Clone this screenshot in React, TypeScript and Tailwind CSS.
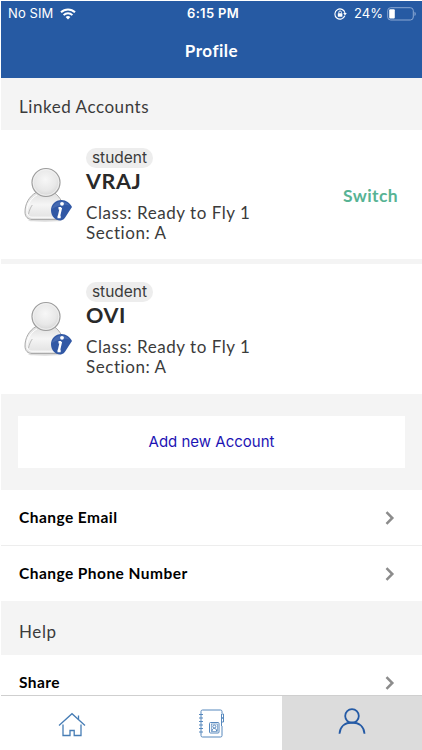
import React from 'react';

const accounts = [
  { role: 'student', name: 'VRAJ', className: 'Ready to Fly 1', section: 'A', canSwitch: true },
  { role: 'student', name: 'OVI', className: 'Ready to Fly 1', section: 'A', canSwitch: false },
];

function WifiIcon() {
  return (
    <svg width="16" height="12" viewBox="0 0 16 12" fill="none" stroke="white" strokeWidth="2">
      <path d="M1 4.3a10 10 0 0 1 14 0" />
      <path d="M3.6 7.1a6.3 6.3 0 0 1 8.8 0" />
      <path d="M8 11.5 5.6 9.1a3.4 3.4 0 0 1 4.8 0Z" fill="white" stroke="none" />
    </svg>
  );
}

function RotationLockIcon() {
  return (
    <svg width="13" height="12" viewBox="0 0 13 12" fill="none" stroke="white">
      <path d="M10.8 7.8A5.1 5.1 0 1 1 11 5" strokeWidth="1.1" />
      <path d="M9.2 5h3.6L11 7.4Z" fill="white" stroke="none" />
      <rect x="3.8" y="5.3" width="4.6" height="3.4" rx=".4" fill="white" stroke="none" />
      <path d="M4.8 5.5V4.3a1.3 1.3 0 0 1 2.6 0v1.2" strokeWidth=".9" />
    </svg>
  );
}

function BatteryIcon() {
  return (
    <svg width="30" height="14" viewBox="0 0 30 14" fill="none">
      <rect x=".7" y=".7" width="25.6" height="12.3" rx="3" stroke="#8ba8d3" />
      <rect x="2.2" y="2.2" width="5.6" height="9.3" rx="1" fill="white" />
      <path d="M27.5 4.8c1.7.6 1.7 3.6 0 4.2Z" fill="#8ba8d3" />
    </svg>
  );
}

function Avatar() {
  return (
    <svg width="50" height="56" viewBox="0 0 50 56" fill="none" className="shrink-0">
      <defs>
        <radialGradient id="head" cx=".48" cy=".4" r=".6">
          <stop offset="0" stopColor="#f7f7f7" />
          <stop offset=".65" stopColor="#e8e8e8" />
          <stop offset="1" stopColor="#d4d4d4" />
        </radialGradient>
        <linearGradient id="body" x1="0" y1="0" x2="0" y2="1">
          <stop offset="0" stopColor="#dedede" />
          <stop offset=".45" stopColor="#f5f5f5" />
          <stop offset="1" stopColor="#e0e0e0" />
        </linearGradient>
      </defs>
      <ellipse cx="22" cy="53.5" rx="17" ry="1.2" fill="#dcdcdc" />
      <path
        d="M13 25.5C6 29.5 2 37 2 45c0 5 3 7.5 7 7.5h25c4 0 7-3 7-7.5 0-8-4-15.5-10-19.5Z"
        fill="url(#body)"
        stroke="#aaa"
      />
      <path d="M14 28C8 31 4 38 4 44.5c0 4 2 5.7 5 5.7h25" stroke="#fff" />
      <path d="M5.5 47c1-4 2-6.5 3.8-9" stroke="#bbb" />
      <circle cx="23" cy="15.5" r="14" fill="url(#head)" stroke="#9d9d9d" strokeWidth="1.2" />
      <circle cx="23" cy="15.5" r="12.8" stroke="#f4f4f4" strokeWidth=".8" />
      <path
        d="M38.5 33c4.500 0 8.500 3 10.500 7-2 3-4 6-6 9.300-1.200 2.200-3 4.200-5.500 4.200-5.500 0-9.500-4.500-9.500-10.200C28 37.500 32.500 33 38.500 33Z"
        fill="#3158a5"
      />
      <path d="M29 42c1-4.5 5-7.5 9.500-7.5 3 0 6 1.500 8 4-6-2-12 .5-17.500 3.500Z" fill="#5577b9" opacity=".6" />
      <path d="m38 40.500-2.300 10M35.500 41.200h2.500M34.500 50h3.200" stroke="white" strokeWidth="2.4" />
      <circle cx="39" cy="36.800" r="1.900" fill="white" />
    </svg>
  );
}

function Chevron() {
  return (
    <svg width="10" height="14" viewBox="0 0 10 14" fill="none" stroke="#8c8c8c" strokeWidth="2.5">
      <path d="m1.500 1.200 5.800 5.800-5.800 5.800" />
    </svg>
  );
}

function HomeIcon() {
  return (
    <svg width="28" height="25" viewBox="0 0 28 25" fill="none" stroke="#477db5" strokeWidth="1.3">
      <path d="M1 13.500 14 1.700l13 11.800" />
      <path d="M20.500 7.300V3.500" />
      <path d="M5 12.500v11h7v-5h4.200v5H23v-11" />
    </svg>
  );
}

function NotebookIcon() {
  return (
    <svg width="27" height="29" viewBox="0 0 27 29" fill="none" stroke="#5788bd">
      <path d="M24 17v9.500a1.500 1.500 0 0 1-1.500 1.500h-18A1.500 1.500 0 0 1 3 26.500v-24A1.500 1.500 0 0 1 4.500 1h18A1.500 1.500 0 0 1 24 2.500v1.800" />
      <path d="M1 5.500h4M1 9h4M1 12.500h4M1 16h4M1 19.500h4M1 23h4" />
      <path d="M23.500 5h2v4h-2ZM23.500 9h2v4h-2ZM23.500 13v4" />
      <rect x="11.500" y="13.500" width="9.500" height="10.500" rx="1" />
      <rect x="13.300" y="15" width="6" height="7.500" strokeWidth=".7" />
      <circle cx="16.300" cy="17.500" r="1.500" />
      <path d="M14 22c0-3.500 4.600-3.500 4.600 0" />
    </svg>
  );
}

function ProfileIcon() {
  return (
    <svg width="28" height="27" viewBox="0 0 28 27" fill="none" stroke="#245aa5" strokeWidth="1.8">
      <circle cx="14" cy="8" r="6.800" />
      <path d="M1.500 25.700C2 18.500 7 14.500 14 14.500s12 4 12.500 11.200" />
    </svg>
  );
}

function MenuRow({ label }: { label: string }) {
  return (
    <div className="flex items-center justify-between h-full pl-[18px] pr-[27px]">
      <span className="pt-px text-[15.5px] font-bold tracking-[0.45px] text-black">{label}</span>
      <Chevron />
    </div>
  );
}

export default function App() {
  return (
    <div className="w-[422px] h-[750px] overflow-hidden bg-white pl-px pt-px font-['Lato',sans-serif] text-[#3b3b3b] whitespace-nowrap">
      <header className="h-[77px] bg-[#265aa3] text-white">
        <div className="grid grid-cols-3 h-[25px] items-center font-['Inter',sans-serif] text-[13px]">
          <div className="flex items-center gap-[7px] pl-[7px]">
            <span className="tracking-[0.1px]">No SIM</span>
            <WifiIcon />
          </div>
          <div className="text-center font-semibold tracking-[0.3px] pl-[3px]">6:15 PM</div>
          <div className="flex items-center justify-end pr-[5px]">
            <RotationLockIcon />
            <span className="ml-[7px] mr-1">24%</span>
            <BatteryIcon />
          </div>
        </div>
        <h1 className="h-[50px] leading-[50px] text-center text-[17px] font-bold tracking-[0.5px]">Profile</h1>
      </header>
      <main className="h-[617px] overflow-hidden bg-[#f4f4f4]">
        <h2 className="h-[52px] pl-[18px] leading-[57px] text-[17px] tracking-[0.55px]">Linked Accounts</h2>
        <div className="flex flex-col gap-[5px]">
          {accounts.map((account) => (
            <div key={account.name} className="flex h-[129px] bg-white pl-[22px] pr-6 last:h-[130px]">
              <div className="pt-[37px]">
                <Avatar />
              </div>
              <div className="flex-1 pl-[13px] pt-[18px]">
                <div className="w-[67px] h-5 leading-5 rounded-full bg-[#ededed] text-center text-[15.5px] font-['Inter',sans-serif]">
                  {account.role}
                </div>
                <div className="h-6 leading-[27px] text-[21.5px] font-bold tracking-[0.6px] text-[#292929]">
                  {account.name}
                </div>
                <div className="pt-[11px] leading-5 text-[17px] tracking-[0.55px]">
                  <div>Class: {account.className}</div>
                  <div>Section: {account.section}</div>
                </div>
              </div>
              {account.canSwitch && (
                <button className="self-center pt-1 text-[17.5px] font-bold tracking-[0.4px] text-[#57b394]">
                  Switch
                </button>
              )}
            </div>
          ))}
        </div>
        <div className="h-[96px] pt-[22px] px-[17px]">
          <button className="w-full h-[52px] bg-white text-[15px] text-[#1d14b4] font-['Inter',sans-serif]">
            Add new Account
          </button>
        </div>
        <div className="h-[56px] bg-white border-b border-[#ededed]">
          <MenuRow label="Change Email" />
        </div>
        <div className="h-[55px] bg-white">
          <MenuRow label="Change Phone Number" />
        </div>
        <h2 className="h-[54px] pl-[18px] leading-[61px] text-[17px] tracking-[0.6px]">Help</h2>
        <div className="h-[55px] bg-white">
          <MenuRow label="Share" />
        </div>
      </main>
      <nav className="grid grid-cols-3 h-[55px] border-t border-[#cfcfcf] bg-white">
        <div className="flex items-center justify-center pt-0.5 pl-0.5">
          <HomeIcon />
        </div>
        <div className="flex items-center justify-center">
          <NotebookIcon />
        </div>
        <div className="flex items-center justify-center bg-[#dcdcdc] pb-[3px]">
          <ProfileIcon />
        </div>
      </nav>
    </div>
  );
}
